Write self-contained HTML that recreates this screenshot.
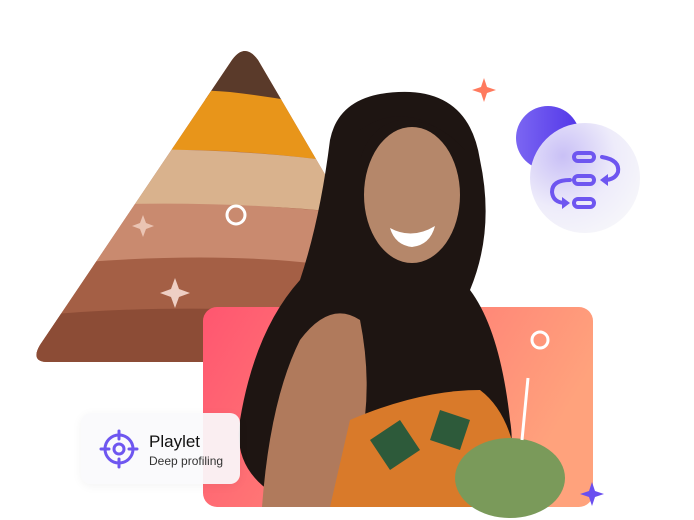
<!DOCTYPE html>
<html><head><style>
body{margin:0;width:694px;height:520px;background:#fff;position:relative;overflow:hidden;font-family:"Liberation Sans",sans-serif}
</style></head><body>
<svg width="694" height="520" style="position:absolute;left:0;top:0">
<defs>
<clipPath id="tri"><path d="M232 60 Q245 42 258 60 L340 200 L340 362 L48 362 Q30 362 40 345 Z"/></clipPath>
<linearGradient id="pk" x1="0" x2="1" y1="0" y2="0.3"><stop offset="0" stop-color="#ff5670"/><stop offset="1" stop-color="#ffa27c"/></linearGradient>
<radialGradient id="lc" cx="0.3" cy="0.3" r="0.8"><stop offset="0" stop-color="#c9c0f6"/><stop offset="0.6" stop-color="#eeecfa"/><stop offset="1" stop-color="#f6f6fa"/></radialGradient>
<linearGradient id="pc" x1="0" x2="1"><stop offset="0" stop-color="#7b66f2"/><stop offset="1" stop-color="#5236e8"/></linearGradient>
</defs>
<g clip-path="url(#tri)">
<rect x="0" y="40" width="360" height="340" fill="#a8664a"/>
<path d="M0 40 H360 V110 Q280 95 200 100 L0 110Z" fill="#5a3a2a"/>
<path d="M0 100 Q150 85 230 92 Q300 100 360 115 V165 Q260 150 180 150 L0 160Z" fill="#e8951a"/>
<path d="M0 155 Q200 140 360 165 V215 Q250 200 150 210 L0 215Z" fill="#d9b28d"/>
<path d="M0 210 Q200 195 360 215 V270 Q220 250 0 275Z" fill="#c98a6f"/>
<path d="M0 270 Q220 245 360 270 V380 H0Z" fill="#a45f45"/>
<path d="M0 320 Q150 300 360 315 V380 H0Z" fill="#8c4c36"/>
</g>
<circle cx="236" cy="215" r="9" fill="none" stroke="#fff" stroke-width="3"/>
<path d="M143 215 l3 8 8 3 -8 3 -3 8 -3 -8 -8 -3 8 -3z" fill="#f2d2c4" opacity=".8"/>
<path d="M175 278 l4 11 11 4 -11 4 -4 11 -4 -11 -11 -4 11 -4z" fill="#f6dcd2" opacity=".9"/>
<rect x="203" y="307" width="390" height="200" rx="14" fill="url(#pk)"/>
<circle cx="540" cy="340" r="8" fill="none" stroke="#fff" stroke-width="3"/>
<!-- person -->
<path d="M330 140 Q340 90 410 92 Q470 95 480 160 Q495 230 470 290 Q500 330 510 420 Q520 480 470 507 L300 507 Q230 480 240 420 Q255 330 300 280 Q320 220 330 140Z" fill="#1e1512"/>
<ellipse cx="412" cy="195" rx="48" ry="68" fill="#b5876a"/>
<path d="M360 130 Q410 95 465 150 Q440 120 400 120 Q370 125 360 160Z" fill="#1e1512"/>
<path d="M390 228 Q412 240 435 226 Q430 245 412 247 Q395 245 390 228Z" fill="#fff"/>
<path d="M300 340 Q330 300 360 320 Q380 420 340 507 L262 507 Q270 400 300 340Z" fill="#b07a5c"/>
<path d="M350 420 Q420 390 480 390 Q520 420 520 507 L330 507Z" fill="#d97a2a"/>
<path d="M370 440 l30 -20 20 30 -30 20z M440 410 l30 10 -10 30 -30 -10z" fill="#2d5a3a"/>
<ellipse cx="510" cy="478" rx="55" ry="40" fill="#7a9a5a"/>
<line x1="522" y1="440" x2="528" y2="378" stroke="#fff" stroke-width="3"/>
<!-- icons -->
<path d="M484 78 l3 9 9 3 -9 3 -3 9 -3 -9 -9 -3 9 -3z" fill="#ff7a5e"/>
<path d="M592 482 l3 9 9 3 -9 3 -3 9 -3 -9 -9 -3 9 -3z" fill="#6a4ff0"/>
<circle cx="548" cy="138" r="32" fill="url(#pc)"/>
<circle cx="585" cy="178" r="55" fill="url(#lc)"/>
<g fill="none" stroke="#6e56f0" stroke-width="4" stroke-linecap="round">
<rect x="574" y="153" width="20" height="8" rx="4"/>
<rect x="574" y="176" width="20" height="8" rx="4"/>
<rect x="574" y="199" width="20" height="8" rx="4"/>
<path d="M602 157 Q620 160 618 172 Q615 180 604 180"/>
<path d="M570 180 Q552 180 552 192 Q553 203 566 203"/>
</g>
<path d="M600 180 l8 -6 v12z M570 203 l-8 -6 v12z" fill="#6e56f0"/>
</svg>
<div style="position:absolute;left:81px;top:413px;width:159px;height:71px;border-radius:10px;background:rgba(250,250,252,.92);box-shadow:0 2px 10px rgba(0,0,0,.05)">
<svg width="40" height="40" style="position:absolute;left:18px;top:16px"><g fill="none" stroke="#6e56f0" stroke-width="3"><circle cx="20" cy="20" r="14"/><circle cx="20" cy="20" r="5"/><path d="M20 2v8M20 30v8M2 20h8M30 20h8" stroke-linecap="round"/></g></svg>
<div style="position:absolute;left:68px;top:19px;font-size:17px;color:#111">Playlet</div>
<div style="position:absolute;left:68px;top:41px;font-size:12px;color:#333">Deep profiling</div>
</div>
</body></html>
